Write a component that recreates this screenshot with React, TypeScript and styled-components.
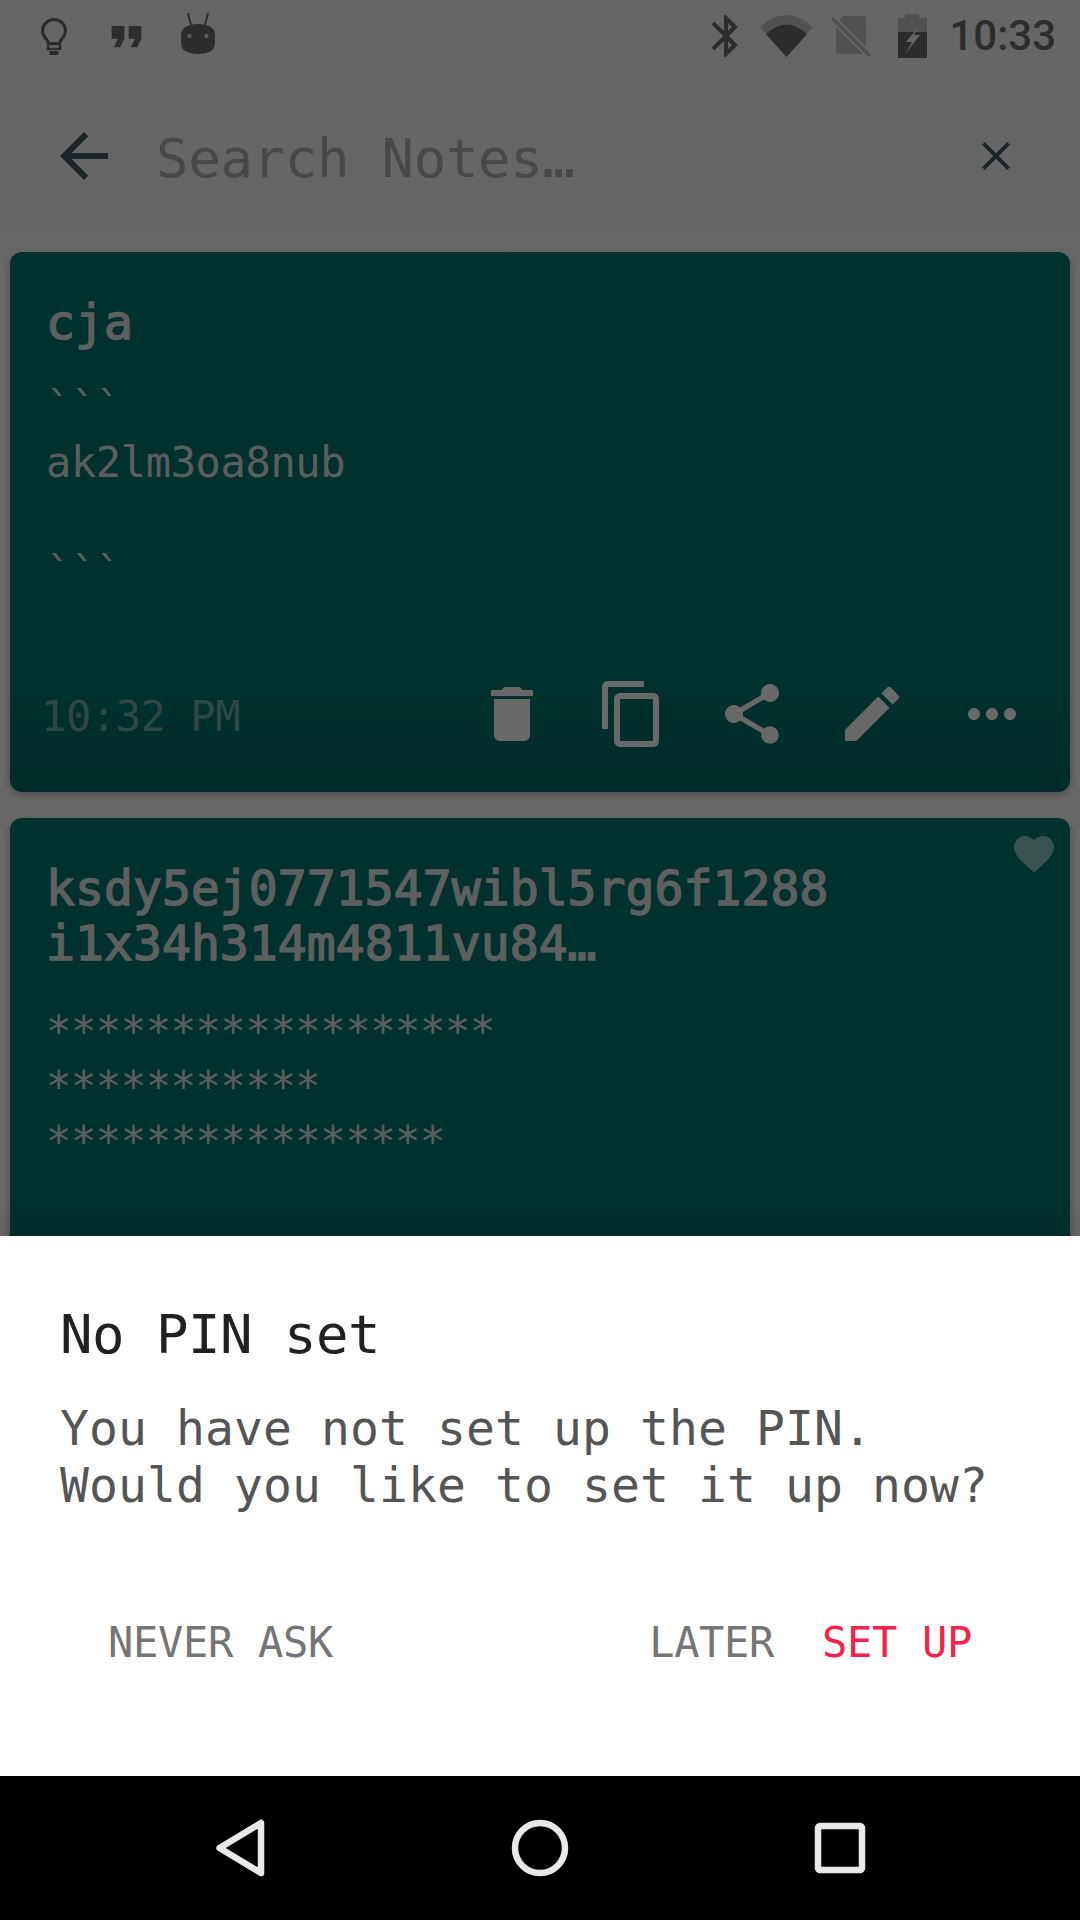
import { createGlobalStyle, styled } from "styled-components";
import {
  MdArrowBack,
  MdBluetooth,
  MdClose,
  MdContentCopy,
  MdDelete,
  MdEdit,
  MdFavorite,
  MdFormatQuote,
  MdMoreHoriz,
  MdShare,
} from "react-icons/md";

const MONO = `"DejaVu Sans Mono", "Liberation Mono", monospace`;

const GlobalStyle = createGlobalStyle`
  html, body {
    margin: 0;
    padding: 0;
    background: #000;
  }
`;

const Screen = styled.div`
  width: 1080px;
  height: 1920px;
  display: flex;
  flex-direction: column;
  overflow: hidden;
  font-family: ${MONO};
`;

const Behind = styled.div`
  position: relative;
  flex: 1;
  min-height: 0;
  overflow: hidden;
  background: linear-gradient(to bottom, #f8f8f8 200px, #fff 270px);
`;

// everything behind the dialog is dimmed by this
const Scrim = styled.div`
  position: absolute;
  inset: 0;
  background: rgba(0, 0, 0, 0.59);
`;

const StatusBar = styled.div`
  height: 72px;
  display: flex;
  align-items: center;
  justify-content: space-between;
  padding: 0 24px 0 18px;
  color: #6c6c6c;
`;

const StatusGroup = styled.div`
  display: flex;
  align-items: center;
`;

const NotifSlot = styled.div`
  width: 72px;
  height: 60px;
  display: flex;
  align-items: center;
  justify-content: center;
`;

const SystemSlot = styled.div<{ $gap: number }>`
  width: 60px;
  height: 60px;
  margin-right: ${(p) => p.$gap}px;
  display: flex;
  align-items: center;
  justify-content: center;
`;

const Clock = styled.span`
  margin-left: 4px;
  font-family: Roboto, sans-serif;
  font-weight: 500;
  font-size: 42px;
  line-height: 60px;
  color: #6c6c6c;
`;

const Toolbar = styled.div`
  height: 168px;
  display: flex;
  align-items: center;
  padding: 0 60px 0 48px;
  color: #455a64;
`;

const SearchText = styled.div`
  flex: 1;
  margin-left: 36px;
  padding-top: 5px;
  font-size: 54px;
  letter-spacing: -0.3px;
  line-height: 64px;
  color: #b0b0b0;
`;

const CardList = styled.div`
  display: flex;
  flex-direction: column;
  gap: 26px;
  padding: 12px 10px 0;
`;

const CardShell = styled.div`
  position: relative;
  border-radius: 12px;
  box-shadow: 0 3px 8px rgba(0, 0, 0, 0.3);
`;

const Card = styled.div`
  position: relative;
  display: flex;
  flex-direction: column;
  height: 540px;
  padding-top: 43px;
  box-sizing: border-box;
  border-radius: 12px;
  overflow: hidden;
  background: #00786e;
`;

const FavoriteMark = styled.div`
  position: absolute;
  top: 12px;
  right: 12px;
  display: flex;
  color: #85c9c0;
`;

// the original's bold is lighter than DejaVu Bold, so thicken the regular cut
const Title = styled.div`
  padding: 0 36px;
  font-weight: 400;
  -webkit-text-stroke: 1.4px currentColor;
  font-size: 48px;
  letter-spacing: 0.08px;
  line-height: 55px;
  color: #e4e8e8;
  white-space: pre;
`;

const Body = styled.div<{ $top: number }>`
  padding: 0 36px;
  margin-top: ${(p) => p.$top}px;
  font-size: 42px;
  letter-spacing: -0.35px;
  line-height: 55px;
  color: #e0e4e4;
  white-space: pre;
`;

const CardFooter = styled.div`
  margin-top: auto;
  display: flex;
  align-items: center;
  justify-content: space-between;
  padding: 0 42px 42px 31px;
  background: linear-gradient(to bottom, rgba(0, 0, 0, 0), rgba(0, 0, 0, 0.12));
`;

const Time = styled.span`
  padding-top: 6px;
  font-size: 42px;
  letter-spacing: -0.4px;
  line-height: 66px;
  color: #6fb0a8;
`;

const Actions = styled.div`
  display: flex;
  gap: 48px;
  color: #ffffff;
`;

const Sheet = styled.div`
  position: relative;
  flex: none;
  height: 540px;
  box-sizing: border-box;
  padding: 67px 60px 0;
  background: #fff;
  box-shadow: 0 -6px 30px rgba(0, 0, 0, 0.12);
`;

const SheetTitle = styled.div`
  font-size: 54px;
  letter-spacing: -0.5px;
  line-height: 64px;
  color: #212121;
`;

const SheetText = styled.div`
  margin-top: 33px;
  font-size: 48px;
  letter-spacing: 0.1px;
  line-height: 57px;
  color: #555;
`;

const SheetActions = styled.div`
  margin-top: 104px;
  display: flex;
  align-items: center;
  padding: 0 48px;
`;

const SheetButton = styled.span<{ $primary?: boolean; $push?: boolean }>`
  font-size: 42px;
  letter-spacing: -0.3px;
  line-height: 50px;
  color: ${(p) => (p.$primary ? "#f5224a" : "#757575")};
  margin-right: ${(p) => (p.$push ? "auto" : "0")};
  margin-left: ${(p) => (p.$primary ? "48px" : "0")};
`;

const NavBar = styled.div`
  position: relative;
  flex: none;
  height: 144px;
  display: grid;
  grid-template-columns: repeat(3, 300px);
  justify-content: center;
  align-items: center;
  justify-items: center;
  background: #000;
`;

function Bulb() {
  return (
    <svg width="60" height="60" viewBox="0 0 60 60">
      <path
        d="M24.5 37.5C24.5 33.5 18.5 31.5 18.5 25a11.5 11.5 0 0 1 23 0C41.5 31.5 35.5 33.5 35.5 37.5Z"
        fill="none"
        stroke="currentColor"
        strokeWidth="3"
      />
      <rect x="24" y="38" width="12" height="5" fill="none" stroke="currentColor" strokeWidth="2.5" />
      <rect x="25.5" y="45" width="9" height="4" fill="currentColor" />
    </svg>
  );
}

function AndroidHead() {
  return (
    <svg width="60" height="60" viewBox="0 0 60 60">
      <path d="M20 7l3 12M40 7l-3 12" stroke="currentColor" strokeWidth="2" />
      <path
        d="M13 29c0-7 6-11 17-11s17 4 17 11v8c0 7-6 11-17 11s-17-4-17-11z"
        fill="currentColor"
      />
      <circle cx="21.5" cy="30" r="2.2" fill="#fff" opacity="0.75" />
      <circle cx="38.5" cy="30" r="2.2" fill="#fff" opacity="0.75" />
    </svg>
  );
}

function Wifi() {
  return (
    <svg width="60" height="60" viewBox="0 0 60 60">
      <path d="M30.5 51L4 21Q30.5-3 57 21Z" fill="#c4c4c4" />
      <path d="M30.5 51L10 28Q30.5 9 51 28Z" fill="currentColor" />
    </svg>
  );
}

function SimOff() {
  return (
    <svg width="60" height="60" viewBox="0 0 60 60">
      <path d="M22 10h20a3 3 0 0 1 3 3v32a3 3 0 0 1-3 3H18a3 3 0 0 1-3-3V17z" fill="#c4c4c4" />
      <path d="M9 10L49 50" stroke="#f8f8f8" strokeWidth="7" />
      <path d="M11 12L49 50" stroke="#c4c4c4" strokeWidth="3.5" />
    </svg>
  );
}

function Battery() {
  return (
    <svg width="60" height="60" viewBox="0 0 60 60">
      <path d="M23 8h14v4h8v14H16V12h7z" fill="#c4c4c4" />
      <rect x="16" y="26" width="29" height="26" fill="currentColor" />
      <path d="M38 19L24 36h6l-6 11 14-18h-6z" fill="#f8f8f8" />
    </svg>
  );
}

function NavBack() {
  return (
    <svg width="72" height="72" viewBox="0 0 72 72">
      <path d="M15.5 36L57 11v50z" fill="none" stroke="#e8e8e8" strokeWidth="6.5" strokeLinejoin="round" />
    </svg>
  );
}

function NavHome() {
  return (
    <svg width="72" height="72" viewBox="0 0 72 72">
      <circle cx="36" cy="36" r="25" fill="none" stroke="#e8e8e8" strokeWidth="6.5" />
    </svg>
  );
}

function NavRecent() {
  return (
    <svg width="72" height="72" viewBox="0 0 72 72">
      <rect x="14" y="14" width="44" height="44" rx="2" fill="none" stroke="#e8e8e8" strokeWidth="6.5" />
    </svg>
  );
}

export default function App() {
  return (
    <Screen>
      <GlobalStyle />
      <Behind>
        <StatusBar>
          <StatusGroup>
            <NotifSlot>
              <Bulb />
            </NotifSlot>
            <NotifSlot>
              <MdFormatQuote size={51} />
            </NotifSlot>
            <NotifSlot>
              <AndroidHead />
            </NotifSlot>
          </StatusGroup>
          <StatusGroup>
            <SystemSlot $gap={0}>
              <MdBluetooth size={50} />
            </SystemSlot>
            <SystemSlot $gap={5}>
              <Wifi />
            </SystemSlot>
            <SystemSlot $gap={1}>
              <SimOff />
            </SystemSlot>
            <SystemSlot $gap={3}>
              <Battery />
            </SystemSlot>
            <Clock>10:33</Clock>
          </StatusGroup>
        </StatusBar>
        <Toolbar>
          <MdArrowBack size={72} />
          <SearchText>Search Notes…</SearchText>
          <MdClose size={48} />
        </Toolbar>
        <CardList>
          <CardShell>
            <Card>
              <Title>cja</Title>
              <Body $top={30}>```</Body>
              <Body $top={0}>ak2lm3oa8nub</Body>
              <Body $top={55}>```</Body>
              <CardFooter>
                <Time>10:32 PM</Time>
                <Actions>
                  <MdDelete size={72} />
                  <MdContentCopy size={72} />
                  <MdShare size={72} />
                  <MdEdit size={72} />
                  <MdMoreHoriz size={72} />
                </Actions>
              </CardFooter>
            </Card>
          </CardShell>
          <CardShell>
            <Card>
              <FavoriteMark>
                <MdFavorite size={48} />
              </FavoriteMark>
              <Title>
                {"ksdy5ej0771547wibl5rg6f1288\ni1x34h314m4811vu84…"}
              </Title>
              <Body $top={33}>{"******************\n***********\n****************"}</Body>
            </Card>
          </CardShell>
        </CardList>
        <Scrim />
      </Behind>
      <Sheet>
        <SheetTitle>No PIN set</SheetTitle>
        <SheetText>
          You have not set up the PIN.
          <br />
          Would you like to set it up now?
        </SheetText>
        <SheetActions>
          <SheetButton $push>NEVER ASK</SheetButton>
          <SheetButton>LATER</SheetButton>
          <SheetButton $primary>SET UP</SheetButton>
        </SheetActions>
      </Sheet>
      <NavBar>
        <NavBack />
        <NavHome />
        <NavRecent />
      </NavBar>
    </Screen>
  );
}
